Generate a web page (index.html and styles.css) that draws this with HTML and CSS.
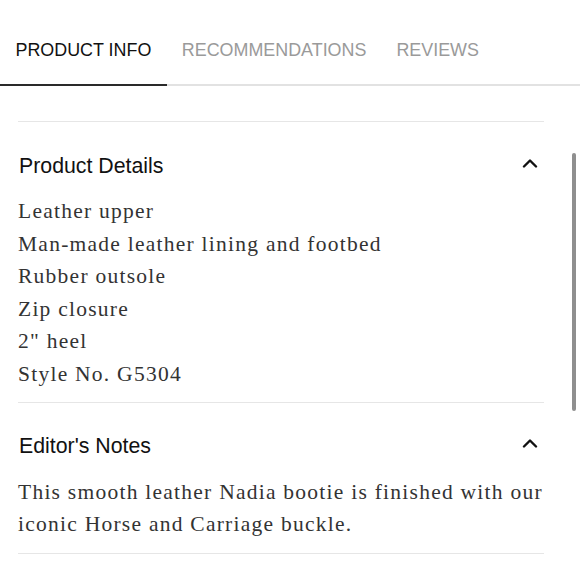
FILE: index.html
```html
<!DOCTYPE html>
<html>
<head>
<meta charset="utf-8">
<link rel="stylesheet" href="styles.css">
</head>
<body>
<div class="tabs">
  <div class="tab active">PRODUCT INFO</div>
  <div class="tab">RECOMMENDATIONS</div>
  <div class="tab">REVIEWS</div>
</div>
<div class="content">
  <section class="acc">
    <div class="acc-head">
      <h2>Product Details</h2>
      <svg class="chev" width="16" height="10" viewBox="0 0 16 10"><path d="M2 8.5 L8 2.5 L14 8.5" fill="none" stroke="#111" stroke-width="2.4" stroke-linecap="round" stroke-linejoin="round"/></svg>
    </div>
    <div class="acc-body">
      <div>Leather upper</div>
      <div>Man-made leather lining and footbed</div>
      <div>Rubber outsole</div>
      <div>Zip closure</div>
      <div>2" heel</div>
      <div>Style No. G5304</div>
    </div>
  </section>
  <section class="acc">
    <div class="acc-head">
      <h2>Editor's Notes</h2>
      <svg class="chev" width="16" height="10" viewBox="0 0 16 10"><path d="M2 8.5 L8 2.5 L14 8.5" fill="none" stroke="#111" stroke-width="2.4" stroke-linecap="round" stroke-linejoin="round"/></svg>
    </div>
    <div class="acc-body notes">
      <p>This smooth leather Nadia bootie is finished with our iconic Horse and Carriage buckle.</p>
    </div>
  </section>
  <div class="end"></div>
</div>
<div class="scrollbar"></div>
</body>
</html>
```
FILE: styles.css
```css
html, body {
  margin: 0;
  padding: 0;
  background: #fff;
}
body {
  width: 580px;
  height: 580px;
  overflow: hidden;
  position: relative;
  font-family: "Liberation Sans", Arial, sans-serif;
}
.tabs {
  display: flex;
  border-bottom: 2px solid #e2e2e2;
}
.tab {
  padding: 40px 15px 24px;
  font-size: 17.9px;
  line-height: 20px;
  color: #9a9a9a;
  margin-bottom: -2px;
  border-bottom: 2px solid transparent;
}
.tab.active {
  color: #111;
  padding-left: 15.5px;
  padding-right: 15.5px;
  border-bottom-color: #2a2a2a;
}
.content {
  padding: 35px 36px 0 18px;
}
.acc {
  border-top: 1px solid #e6e6e6;
  padding: 31px 0 12px;
}
.acc:first-child {
  padding-top: 32px;
}
.acc-head {
  display: flex;
  justify-content: space-between;
  align-items: center;
}
.acc-head h2 {
  margin: 0 0 0 1px;
  font-size: 21.3px;
  line-height: 24px;
  font-weight: normal;
  color: #111;
}
.chev {
  margin-right: 6px;
  margin-top: -6px;
}
.acc-body {
  margin-top: 17px;
  font-family: "Liberation Serif", "Times New Roman", serif;
  font-size: 21.5px;
  line-height: 32.5px;
  letter-spacing: 1.25px;
  color: #333;
}
.acc-body.notes {
  line-height: 32px;
  margin-top: 18px;
}
.acc-body p {
  margin: 0;
}
.end {
  border-top: 1px solid #e6e6e6;
  margin-top: 1px;
}
.scrollbar {
  position: absolute;
  left: 572px;
  top: 153px;
  width: 4px;
  height: 258px;
  border-radius: 2px;
  background: #8f8f8f;
}
```
